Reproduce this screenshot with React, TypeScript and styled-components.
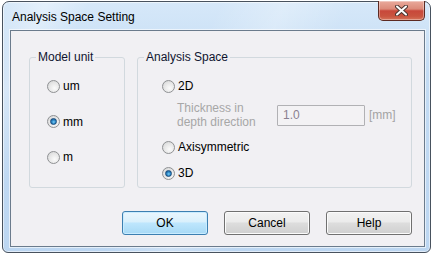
import React, { useState } from 'react';
import styled, { createGlobalStyle } from 'styled-components';

const GlobalStyle = createGlobalStyle`
  html, body {
    margin: 0;
    padding: 0;
    background: #ffffff;
  }
  body {
    font-family: "Liberation Sans", Arial, sans-serif;
    font-size: 12px;
  }
`;

const Window = styled.div`
  box-sizing: border-box;
  width: 429px;
  height: 252px;
  margin: 1px 0 0 2px;
  border: 1px solid #48525e;
  border-radius: 7px 7px 6px 6px;
  padding: 0 5px 5px 7px;
  display: flex;
  flex-direction: column;
  background:
    linear-gradient(115deg, rgba(255, 255, 255, 0) 0%, rgba(255, 255, 255, 0.35) 8%, rgba(255, 255, 255, 0) 16%, rgba(255, 255, 255, 0) 40%, rgba(255, 255, 255, 0.25) 52%, rgba(255, 255, 255, 0) 64%),
    linear-gradient(180deg, #d6e8f9 0%, #c3dbf3 30%, #bcd6f1 100%);
  box-shadow: inset 0 0 0 1px rgba(255, 255, 255, 0.55);
`;

const TitleBar = styled.div`
  height: 28px;
  display: flex;
  align-items: center;
  justify-content: space-between;
  padding-left: 2px;
`;

const Title = styled.span`
  color: #000000;
  font-size: 12px;
  margin-top: 1px;
`;

const CloseButton = styled.div`
  box-sizing: border-box;
  align-self: flex-start;
  width: 47px;
  height: 20px;
  margin-top: -1px;
  border: 1px solid #5c2a22;
  border-top: none;
  border-radius: 0 0 5px 5px;
  display: flex;
  align-items: center;
  justify-content: center;
  background: linear-gradient(180deg, #e9aa9c 0%, #dc8a79 42%, #c8483a 52%, #c9543f 80%, #d6745a 100%);
  box-shadow: inset 0 0 0 1px rgba(255, 255, 255, 0.35);
`;

const Client = styled.div`
  box-sizing: border-box;
  height: 217px;
  border: 1px solid #6b7b8c;
  background: #f1f0f3;
  box-shadow: 0 0 0 1px rgba(255, 255, 255, 0.6);
  padding: 19px 12px 0 18px;
  display: flex;
  flex-direction: column;
`;

const GroupRow = styled.div`
  display: flex;
  gap: 12px;
  height: 138px;
`;

const Group = styled.fieldset<{ $width: number }>`
  box-sizing: border-box;
  width: ${p => p.$width}px;
  height: 138px;
  margin: 0;
  padding: 0;
  min-width: 0;
  border: 1px solid #d2d9de;
  border-radius: 3px;
`;

const Legend = styled.legend`
  margin-left: 6px;
  padding: 0 2px;
  line-height: 15px;
  color: #0f1530;
`;

const GroupBody = styled.div<{ $left: number }>`
  display: flex;
  flex-direction: column;
  padding: 13px 0 0 ${p => p.$left}px;
`;

const OptionRow = styled.label<{ $gap?: number; $disabled?: boolean }>`
  display: flex;
  align-items: center;
  height: 16px;
  margin-bottom: ${p => p.$gap ?? 0}px;
  color: ${p => (p.$disabled ? '#a3a3a3' : '#000000')};
  cursor: default;
`;

const RadioDot = styled.span<{ $checked: boolean }>`
  box-sizing: border-box;
  width: 13px;
  height: 13px;
  margin-right: 3px;
  border-radius: 50%;
  border: 1px solid #8f9193;
  flex: none;
  display: flex;
  align-items: center;
  justify-content: center;
  background: radial-gradient(circle at 60% 65%, #fbfbfb 0%, #e6e6e6 55%, #cfd0d1 100%);

  &::after {
    content: '';
    display: ${p => (p.$checked ? 'block' : 'none')};
    width: 7px;
    height: 7px;
    border-radius: 50%;
    box-sizing: border-box;
    border: 1px solid #1a4b7a;
    background: radial-gradient(circle at 55% 60%, #7fd0f6 0%, #2a86c6 45%, #124f86 100%);
  }
`;

const ThicknessRow = styled.div`
  display: flex;
  align-items: center;
  margin: 7px 0 10px 15px;
`;

const ThicknessLabel = styled.div`
  width: 96px;
  margin-right: 4px;
  line-height: 14px;
  color: #a7a7a7;
`;

const ValueBox = styled.div`
  box-sizing: border-box;
  width: 88px;
  height: 21px;
  border: 1px solid #b1b1b4;
  border-radius: 1px;
  padding-left: 5px;
  display: flex;
  align-items: center;
  color: #8a8090;
  background: #f3f2f4;
`;

const Unit = styled.span`
  margin-left: 4px;
  color: #a3a3a3;
`;

const ButtonRow = styled.div`
  display: flex;
  justify-content: flex-end;
  gap: 16px;
  margin-top: 23px;
`;

const Button = styled.button<{ $default?: boolean }>`
  box-sizing: border-box;
  width: 86px;
  height: 24px;
  padding: 0;
  font-family: "Liberation Sans", Arial, sans-serif;
  font-size: 12px;
  color: #000000;
  border-radius: 3px;
  border: 1px solid ${p => (p.$default ? '#3c7fb1' : '#707070')};
  background: ${p =>
    p.$default
      ? 'linear-gradient(180deg, #eaf6fd 0%, #d9f0fc 45%, #bee6fd 50%, #a7d9f5 100%)'
      : 'linear-gradient(180deg, #f2f2f2 0%, #ebebeb 45%, #dddddd 50%, #cfcfcf 100%)'};
  box-shadow: inset 0 0 0 1px ${p => (p.$default ? '#c9ecff' : '#fbfbfb')};
`;

type Opt = { key: string; label: string };

const units: Opt[] = [
  { key: 'um', label: 'um' },
  { key: 'mm', label: 'mm' },
  { key: 'm', label: 'm' },
];

const CloseGlyph = () => (
  <svg width="13" height="11" viewBox="0 0 13 11">
    <path d="M2 1.5 L11 9.5 M11 1.5 L2 9.5" stroke="#4a3530" strokeWidth="4" strokeLinecap="round" />
    <path d="M2 1.5 L11 9.5 M11 1.5 L2 9.5" stroke="#ffffff" strokeWidth="2" strokeLinecap="round" />
  </svg>
);

const App: React.FC = () => {
  const [unit, setUnit] = useState('mm');
  const [space, setSpace] = useState('3D');

  return (
    <>
      <GlobalStyle />
      <Window>
        <TitleBar>
          <Title>Analysis Space Setting</Title>
          <CloseButton>
            <CloseGlyph />
          </CloseButton>
        </TitleBar>
        <Client>
          <GroupRow>
            <Group $width={96}>
              <Legend>Model unit</Legend>
              <GroupBody $left={17}>
                {units.map((u, i) => (
                  <OptionRow key={u.key} $gap={i < units.length - 1 ? 19.5 : 0} onClick={() => setUnit(u.key)}>
                    <RadioDot $checked={unit === u.key} />
                    {u.label}
                  </OptionRow>
                ))}
              </GroupBody>
            </Group>
            <Group $width={275}>
              <Legend>Analysis Space</Legend>
              <GroupBody $left={24}>
                <OptionRow onClick={() => setSpace('2D')}>
                  <RadioDot $checked={space === '2D'} />
                  2D
                </OptionRow>
                <ThicknessRow>
                  <ThicknessLabel>Thickness in depth direction</ThicknessLabel>
                  <ValueBox>1.0</ValueBox>
                  <Unit>[mm]</Unit>
                </ThicknessRow>
                <OptionRow $gap={10} onClick={() => setSpace('axi')}>
                  <RadioDot $checked={space === 'axi'} />
                  Axisymmetric
                </OptionRow>
                <OptionRow onClick={() => setSpace('3D')}>
                  <RadioDot $checked={space === '3D'} />
                  3D
                </OptionRow>
              </GroupBody>
            </Group>
          </GroupRow>
          <ButtonRow>
            <Button $default>OK</Button>
            <Button>Cancel</Button>
            <Button>Help</Button>
          </ButtonRow>
        </Client>
      </Window>
    </>
  );
};

export default App;
